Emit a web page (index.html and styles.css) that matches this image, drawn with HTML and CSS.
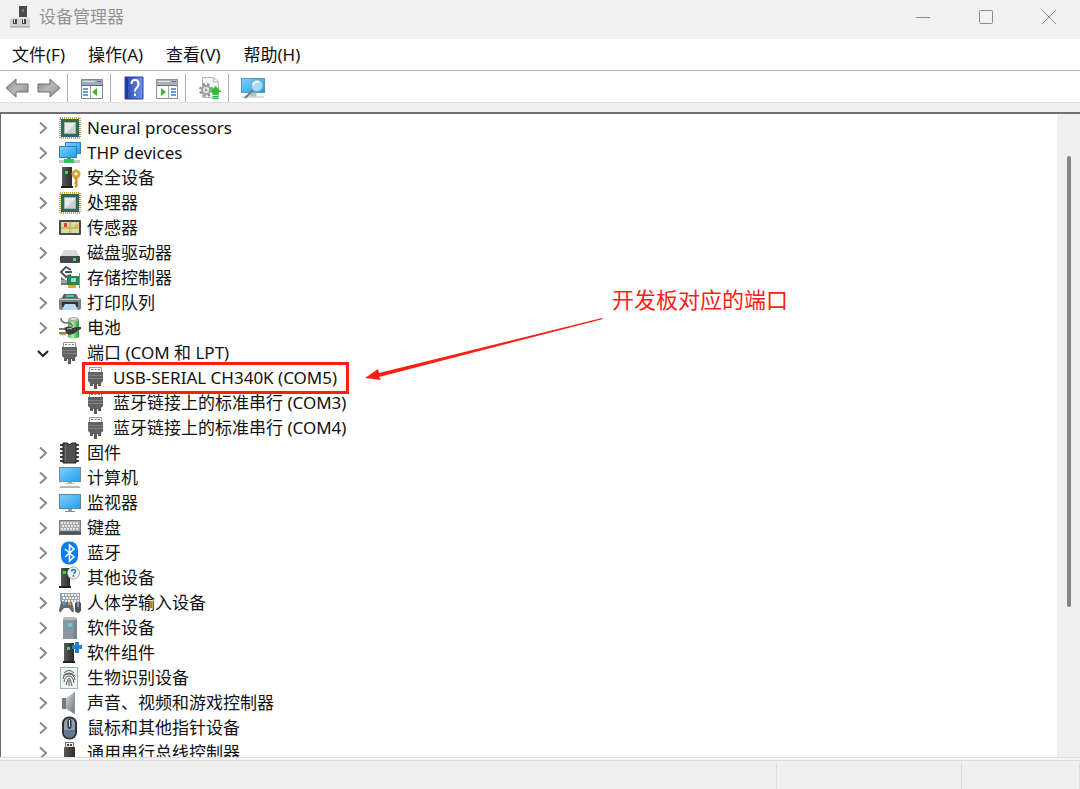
FILE: index.html
```html
<!DOCTYPE html>
<html lang="zh-CN">
<head>
    <meta charset="UTF-8">
    <meta name="viewport" content="width=device-width, initial-scale=1.0">
    <title>设备管理器</title>
    <link rel="stylesheet" href="styles.css">
</head>
<body>
    <svg class="sprite" aria-hidden="true">
        <defs>
            <linearGradient id="blue" x1="0" y1="0" x2="1" y2="1">
                <stop offset="0" stop-color="#7fd0fb"/>
                <stop offset="1" stop-color="#1f9df0"/>
            </linearGradient>
            <linearGradient id="steel" x1="0" y1="0" x2="1" y2="1">
                <stop offset="0" stop-color="#d5d8da"/>
                <stop offset="1" stop-color="#6b737a"/>
            </linearGradient>
            <linearGradient id="dark" x1="0" y1="0" x2="1" y2="0">
                <stop offset="0" stop-color="#5a5a5a"/>
                <stop offset="1" stop-color="#2b2b2b"/>
            </linearGradient>
            <linearGradient id="arrow" x1="0" y1="0" x2="1" y2="1">
                <stop offset="0" stop-color="#8a8a8a"/>
                <stop offset="0.5" stop-color="#b8b8b8"/>
                <stop offset="1" stop-color="#858585"/>
            </linearGradient>
            <linearGradient id="book" x1="0" y1="0" x2="1" y2="0">
                <stop offset="0" stop-color="#2746b0"/>
                <stop offset="1" stop-color="#6f92ea"/>
            </linearGradient>
            <linearGradient id="green" x1="0" y1="0" x2="1" y2="0">
                <stop offset="0" stop-color="#2fb53a"/>
                <stop offset="0.4" stop-color="#b4f2a8"/>
                <stop offset="1" stop-color="#1e9a2c"/>
            </linearGradient>

            <symbol id="chevron" viewBox="0 0 18 18">
                <path d="M6 3.5l6 5.5-6 5.5" fill="none" stroke="#8a8a8a" stroke-width="2"/>
            </symbol>
            <symbol id="chevron-open" viewBox="0 0 18 18">
                <path d="M4 7l5 5 5-5" fill="none" stroke="#262626" stroke-width="2.2"/>
            </symbol>

            <symbol id="chip" viewBox="0 0 24 24">
                <rect x="2" y="2" width="20" height="20" fill="none" stroke="#c9a04a" stroke-width="2" stroke-dasharray="1 1"/>
                <rect x="3" y="3" width="18" height="18" fill="#2e6b50"/>
                <rect x="6.5" y="6.5" width="11" height="11" fill="#e9ebea" stroke="#a3b8ad"/>
                <path d="M17 8v9H8z" fill="#cdd1cf"/>
            </symbol>
            <symbol id="network" viewBox="0 0 24 24">
                <rect x="7.5" y="1.500" width="15" height="11" fill="url(#blue)" stroke="#2f7fb8"/>
                <rect x="1.5" y="5.5" width="17" height="11" fill="url(#blue)" stroke="#2f7fb8"/>
                <rect x="9" y="17" width="4" height="2" fill="#2fb353"/>
                <rect x="1" y="19" width="21" height="3" fill="#c3c7c9"/>
                <rect x="6" y="18" width="10" height="4" fill="#35c25c"/>
            </symbol>
            <symbol id="security" viewBox="0 0 24 24">
                <rect x="4" y="1" width="10" height="20" fill="url(#dark)"/>
                <rect x="3" y="20" width="12" height="2" fill="#222"/>
                <rect x="7" y="5" width="3" height="3" fill="#35e04a"/>
                <circle cx="18" cy="8" r="3" fill="none" stroke="#d9a23a" stroke-width="3"/>
                <path d="M16.5 11h3v9l-1.500 2-1.500-2 1-1-1-2 1-2-1-2z" fill="#c98d24"/>
            </symbol>
            <symbol id="sensor" viewBox="0 0 24 24">
                <rect x="1" y="4" width="22" height="15" rx="1" fill="#4a4a4a"/>
                <rect x="3" y="6" width="18" height="11" fill="#cfe0a6"/>
                <path d="M3 12h18M12 6v11M16 12l5-4" stroke="#e0a94a" stroke-width="1.500" fill="none"/>
                <rect x="6" y="7" width="3" height="4" fill="#e23c3c"/>
            </symbol>
            <symbol id="disk" viewBox="0 0 24 24">
                <path d="M6 9h12l4 7H2z" fill="#d6d8d9"/>
                <rect x="2" y="15" width="20" height="7" rx="1" fill="#45494c"/>
                <rect x="15" y="17" width="3" height="3" fill="#3ee84f"/>
            </symbol>
            <symbol id="storage" viewBox="0 0 24 24">
                <path d="M13 4L8 1 3 6l5 5 5-2M7 6h7" fill="none" stroke="#555" stroke-width="2"/>
                <path d="M3 11l6 4 5-3v7H3z" fill="#777"/>
                <path d="M3 14h7v3H3z" fill="#a4a4a4"/>
                <rect x="9" y="10" width="12" height="9" fill="#26855c"/>
                <rect x="13" y="12" width="5" height="4" fill="#9fd6b8"/>
                <path d="M10 20.500h8" stroke="#e3ab22" stroke-width="3"/>
                <path d="M21.500 7v15" stroke="#8a8f92"/>
            </symbol>
            <symbol id="printer" viewBox="0 0 24 24">
                <path d="M6 3h12l3 5H3z" fill="#5d6366"/>
                <path d="M8 5h8" stroke="#3dd68c" stroke-width="2"/>
                <rect x="1" y="7" width="22" height="12" rx="2" fill="#7b8286"/>
                <path d="M2 8.500h20" stroke="#c5cacc"/>
                <rect x="4" y="11" width="16" height="5" fill="#2f3335"/>
                <path d="M7 13h10l3 6H4z" fill="#b7dcf2"/>
            </symbol>
            <symbol id="battery" viewBox="0 0 24 24">
                <path d="M10 4v17q5 3 11 0V4z" fill="url(#green)"/>
                <ellipse cx="15.5" cy="3.500" rx="5.500" ry="2.500" fill="#a8afa8"/>
                <ellipse cx="15.5" cy="3" rx="3" ry="1" fill="#dfe3df"/>
                <path d="M3 2q0 5 6 5t5 4" fill="none" stroke="#6b6b6b" stroke-width="1.500"/>
                <path d="M6 12q4-3 9 0l3-1h5v2l-4 2q-4 5-10 3z" fill="#3a3a3a"/>
                <path d="M9 13q3-1 5 0" fill="none" stroke="#c9c9c9"/>
                <path d="M1 13h7M1 17h8" stroke="#555" stroke-width="1.500"/>
                <path d="M2 18.500h6" stroke="#e0a82a" stroke-width="1.500"/>
            </symbol>
            <symbol id="port" viewBox="0 0 24 24">
                <path d="M5.5 8V1.500h12V8" fill="#fff" stroke="#9a9a9a"/>
                <path d="M7 3.500h2M10.500 3.500h2M14 3.500h2" stroke="#777"/>
                <path d="M4 6h15v9l-3 3H7l-3-3z" fill="#626262"/>
                <path d="M4 9.500h15M4 12.500h15" stroke="#808080"/>
                <path d="M7.500 17v3M11.500 17v6M15.500 17v3" stroke="#5a5a5a" stroke-width="3"/>
            </symbol>
            <symbol id="firmware" viewBox="0 0 24 24">
                <path d="M2 4h19M2 8h19M2 12h19M2 16h19M2 20h19" stroke="#444" stroke-width="2"/>
                <path d="M5 2h4q2.500 3 5 0h4v20H5z" fill="#505050" stroke="#222"/>
                <path d="M7.500 4v16" stroke="#707070"/>
            </symbol>
            <symbol id="computer" viewBox="0 0 24 24">
                <rect x="1.500" y="1.500" width="21" height="14" fill="url(#blue)" stroke="#74899a"/>
                <path d="M10 16h4v2h-4z" fill="#9db0bb"/>
                <path d="M7 17.500h10" stroke="#bac4ca"/>
                <path d="M3 20h18l2 2H1z" fill="#a8bac5"/>
            </symbol>
            <symbol id="monitor" viewBox="0 0 24 24">
                <rect x="1.500" y="3.500" width="21" height="14" fill="url(#blue)" stroke="#5c87a3"/>
                <path d="M10 18h4v2h-4z" fill="#8ca4b3"/>
                <path d="M7 20.500h10" stroke="#7d93a1"/>
            </symbol>
            <symbol id="keyboard" viewBox="0 0 24 24">
                <rect x="1" y="4" width="22" height="15" fill="#777f85"/>
                <rect x="2" y="5" width="20" height="10" fill="#a6abae"/>
                <path d="M3 7h18M4 10h17M3 13h18" stroke="#f6f6f6" stroke-width="1.600" stroke-dasharray="2 1"/>
                <path d="M1 17h22" stroke="#4d5459" stroke-width="3"/>
            </symbol>
            <symbol id="bluetooth" viewBox="0 0 24 24">
                <rect x="3" y="0.500" width="17" height="23" rx="8" fill="#0a7cf2"/>
                <path d="M7 8l9 8-4.500 4V4L16 8l-9 8" fill="none" stroke="#fff" stroke-width="1.600"/>
            </symbol>
            <symbol id="unknown" viewBox="0 0 24 24">
                <rect x="3" y="2" width="9" height="19" fill="url(#dark)"/>
                <rect x="1" y="20" width="12" height="2" fill="#222"/>
                <rect x="5" y="5" width="3" height="3" fill="#35e04a"/>
                <circle cx="15.500" cy="7" r="6" fill="#f4f8fb" stroke="#9aa6ae"/>
                <path d="M13.500 5.500q0-2 2-2t2 2q0 1-2 2.500M15.500 9v2" fill="none" stroke="#1d74c9" stroke-width="1.500"/>
            </symbol>
            <symbol id="hid" viewBox="0 0 24 24">
                <rect x="2" y="2" width="20" height="9" fill="#9da3a7"/>
                <path d="M4 4h17M5 7h16M4 10h17" stroke="#f3f3f3" stroke-width="2" stroke-dasharray="2 1"/>
                <path d="M3 11q1-1 3 0h5q2-1 3 0l2 8q0 3-2 2l-3-4H6l-3 4q-2 1-2-2z" fill="#656d73"/>
                <circle cx="6" cy="12" r="2" fill="#35a2e8"/>
                <path d="M10 11h3v3h-3z" fill="#e69330"/>
                <path d="M17 12q3-3 6 0v8q-3 4-6 0z" fill="#4a545c"/>
                <path d="M20 11v5" stroke="#ccc"/>
            </symbol>
            <symbol id="software" viewBox="0 0 24 24">
                <path d="M6 1h11l2 2v20H5V3z" fill="#8b979f"/>
                <path d="M6 1h11l2 3H5z" fill="#b4bdc2"/>
                <path d="M16 4h3v19h-4z" fill="#7a868e"/>
                <circle cx="12" cy="9" r="2" fill="#4be0f5"/>
            </symbol>
            <symbol id="component" viewBox="0 0 24 24">
                <rect x="6" y="2" width="10" height="19" fill="url(#dark)"/>
                <rect x="5" y="20" width="12" height="2" fill="#222"/>
                <rect x="9" y="6" width="3" height="3" fill="#35e04a"/>
                <path d="M14 4h3V1h4v3h3v4h-3v4h-4V8h-3z" fill="#2680c9"/>
            </symbol>
            <symbol id="finger" viewBox="0 0 24 24">
                <rect x="2.500" y="1.500" width="17" height="21" fill="#eef4f2" stroke="#9cb8b0"/>
                <path d="M6 7q5-5 10 0M5 10q6-6 12 0M5 13q1-5 6-5t6 6M6 16q1-6 5-6 4 0 5 7M8 19q2-7 3-7t3 8M11 14v6" fill="none" stroke="#555"/>
            </symbol>
            <symbol id="speaker" viewBox="0 0 24 24">
                <path d="M4 7h5v11H4z" fill="#747b80"/>
                <path d="M8 7l9-6v22l-9-5z" fill="url(#steel)"/>
                <path d="M16.500 1v22" stroke="#8a9196"/>
            </symbol>
            <symbol id="mouse" viewBox="0 0 24 24">
                <rect x="5" y="1.500" width="13" height="21" rx="6" fill="#8e9fb0" stroke="#2c3136" stroke-width="2"/>
                <path d="M6 14h11q0 8-5.500 8T6 14z" fill="#60788f"/>
                <rect x="9.500" y="3" width="4" height="10" rx="2" fill="#30363b"/>
                <path d="M11.500 4v7" stroke="#dde3e8"/>
            </symbol>
            <symbol id="usb" viewBox="0 0 24 24">
                <path d="M7.500 7V1.500h8V7" fill="#eee" stroke="#777"/>
                <path d="M9 4h2M12 4h2" stroke="#444" stroke-width="2"/>
                <rect x="6" y="6" width="11" height="16" rx="1" fill="url(#dark)"/>
            </symbol>

            <symbol id="devmgr" viewBox="0 0 24 24">
                <rect x="11" y="1" width="8" height="13" fill="#484c4c"/>
                <rect x="14" y="4" width="2" height="3" fill="#2f9e4c"/>
                <path d="M4 12h16l2 3H2z" fill="#e2e3e4"/>
                <rect x="2" y="14" width="20" height="8" fill="#cfd0d4"/>
                <path d="M5 14h4v5H5zM14 14h4v5h-4z" fill="#45484c"/>
                <path d="M6 14h1v4H6zM15 14h1v4h-1z" fill="#f5f5f5"/>
                <path d="M2 22h20" stroke="#999"/>
            </symbol>
            <symbol id="back" viewBox="0 0 24 24">
                <path d="M1 12l10-9v5h12v8H11v5z" fill="url(#arrow)" stroke="#6e6e6e"/>
            </symbol>
            <symbol id="forward" viewBox="0 0 24 24">
                <path d="M23 12L13 3v5H1v8h12v5z" fill="url(#arrow)" stroke="#6e6e6e"/>
            </symbol>
            <symbol id="tree-pane" viewBox="0 0 24 24">
                <rect x="1.500" y="3.500" width="21" height="19" fill="#fff" stroke="#7d8b98"/>
                <path d="M2 4h20v5H2z" fill="#9eacb9"/>
                <path d="M3 5.500h12" stroke="#dde6ee"/>
                <path d="M17 5.500h4M2 9.500h20" stroke="#596b7a"/>
                <path d="M3 13h5M3 16h5M3 19h5" stroke="#3b7cba" stroke-width="1.500"/>
                <path d="M10.500 10v12" stroke="#9aa6b0"/>
                <path d="M17 12v8l-5-4z" fill="#3fb52c"/>
            </symbol>
            <symbol id="action-pane" viewBox="0 0 24 24">
                <rect x="1.500" y="3.500" width="21" height="19" fill="#fff" stroke="#8b949c"/>
                <path d="M2 4h20v5H2z" fill="#abb1b6"/>
                <path d="M3 5.500h12" stroke="#e3e7eb"/>
                <path d="M17 5.500h4M2 9.500h20" stroke="#6a737b"/>
                <path d="M16 13h5M16 16h5M16 19h5" stroke="#3b7cba" stroke-width="1.500"/>
                <path d="M13.500 10v12" stroke="#9aa6b0"/>
                <path d="M6 12v8l5-4z" fill="#3fb52c"/>
            </symbol>
            <symbol id="help" viewBox="0 0 24 24">
                <path d="M2 1h18v22H2z" fill="url(#book)" stroke="#2442a0"/>
                <path d="M4 1v22" stroke="#152d80"/>
                <path d="M8.500 8q0-4 3.500-4t3.500 4q0 2-1.500 3.500-2 1.500-2 4M12 17.500v2.500" fill="none" stroke="#fff" stroke-width="2"/>
            </symbol>
            <symbol id="update" viewBox="0 0 24 24">
                <path d="M4.500 1.500h11l5 4v16h-16z" fill="#f4f4f4" stroke="#b9b9b9"/>
                <path d="M15.500 1v5h5" fill="none" stroke="#b9b9b9"/>
                <circle cx="8" cy="14" r="5" fill="none" stroke="#8e8e8e" stroke-width="4" stroke-dasharray="2 2"/>
                <circle cx="8" cy="14" r="4" fill="#eee" stroke="#a0a0a0" stroke-width="2"/>
                <circle cx="8" cy="14" r="1.500" fill="#999"/>
                <path d="M17.500 10l6 6h-3v3h-6v-3h-3z" fill="#27c22d"/>
                <path d="M14.500 20.500h6M14.500 22.500h6" stroke="#27c22d"/>
            </symbol>
            <symbol id="scan" viewBox="0 0 24 24">
                <rect x="0.500" y="2.500" width="23" height="14" fill="url(#blue)" stroke="#4b9bcb"/>
                <path d="M9 17h6v3H9zM1 21h22" fill="#b1bfc8" stroke="#b1bfc8"/>
                <path d="M12 14l-8 8" stroke="#6d7c86" stroke-width="2"/>
                <circle cx="16" cy="9.500" r="6" fill="#a5dcf7" stroke="#7c9db0"/>
                <path d="M12 9q2-4 6-3" fill="none" stroke="#e6f7ff" stroke-width="2"/>
            </symbol>
        </defs>
    </svg>

    <div class="window">
        <header class="titlebar">
            <svg class="icon"><use href="#devmgr"/></svg>
            <h1>设备管理器</h1>
            <div class="controls">
                <button type="button" aria-label="最小化"><svg viewBox="0 0 16 16"><path d="M1 8.500h14"/></svg></button>
                <button type="button" aria-label="最大化"><svg viewBox="0 0 16 16"><rect x="1.500" y="1.500" width="13" height="13" rx="1"/></svg></button>
                <button type="button" aria-label="关闭"><svg viewBox="0 0 16 16"><path d="M1 1l14 14M15 1L1 15"/></svg></button>
            </div>
        </header>

        <nav class="menubar">
            <button type="button">文件(F)</button>
            <button type="button">操作(A)</button>
            <button type="button">查看(V)</button>
            <button type="button">帮助(H)</button>
        </nav>

        <div class="toolbar">
            <button type="button" aria-label="后退"><svg class="icon"><use href="#back"/></svg></button>
            <button type="button" aria-label="前进"><svg class="icon"><use href="#forward"/></svg></button>
            <span class="separator"></span>
            <button type="button" aria-label="显示/隐藏控制台树"><svg class="icon"><use href="#tree-pane"/></svg></button>
            <span class="separator"></span>
            <button type="button" aria-label="帮助"><svg class="icon"><use href="#help"/></svg></button>
            <button type="button" aria-label="显示/隐藏操作窗格"><svg class="icon"><use href="#action-pane"/></svg></button>
            <span class="separator"></span>
            <button type="button" aria-label="更新驱动程序"><svg class="icon"><use href="#update"/></svg></button>
            <span class="separator"></span>
            <button type="button" aria-label="扫描检测硬件改动"><svg class="icon"><use href="#scan"/></svg></button>
        </div>

        <main class="content">
            <ul class="tree">
                <li><div class="row"><button type="button" aria-label="展开"><svg><use href="#chevron"/></svg></button><span class="node"><svg class="icon"><use href="#chip"/></svg>Neural processors</span></div></li>
                <li><div class="row"><button type="button" aria-label="展开"><svg><use href="#chevron"/></svg></button><span class="node"><svg class="icon"><use href="#network"/></svg>THP devices</span></div></li>
                <li><div class="row"><button type="button" aria-label="展开"><svg><use href="#chevron"/></svg></button><span class="node"><svg class="icon"><use href="#security"/></svg>安全设备</span></div></li>
                <li><div class="row"><button type="button" aria-label="展开"><svg><use href="#chevron"/></svg></button><span class="node"><svg class="icon"><use href="#chip"/></svg>处理器</span></div></li>
                <li><div class="row"><button type="button" aria-label="展开"><svg><use href="#chevron"/></svg></button><span class="node"><svg class="icon"><use href="#sensor"/></svg>传感器</span></div></li>
                <li><div class="row"><button type="button" aria-label="展开"><svg><use href="#chevron"/></svg></button><span class="node"><svg class="icon"><use href="#disk"/></svg>磁盘驱动器</span></div></li>
                <li><div class="row"><button type="button" aria-label="展开"><svg><use href="#chevron"/></svg></button><span class="node"><svg class="icon"><use href="#storage"/></svg>存储控制器</span></div></li>
                <li><div class="row"><button type="button" aria-label="展开"><svg><use href="#chevron"/></svg></button><span class="node"><svg class="icon"><use href="#printer"/></svg>打印队列</span></div></li>
                <li><div class="row"><button type="button" aria-label="展开"><svg><use href="#chevron"/></svg></button><span class="node"><svg class="icon"><use href="#battery"/></svg>电池</span></div></li>
                <li>
                    <div class="row"><button type="button" aria-label="折叠"><svg><use href="#chevron-open"/></svg></button><span class="node"><svg class="icon"><use href="#port"/></svg>端口 (COM 和 LPT)</span></div>
                    <ul class="children">
                        <li class="row"><span class="node marked"><svg class="icon"><use href="#port"/></svg>USB-SERIAL CH340K (COM5)</span></li>
                        <li class="row"><span class="node"><svg class="icon"><use href="#port"/></svg>蓝牙链接上的标准串行 (COM3)</span></li>
                        <li class="row"><span class="node"><svg class="icon"><use href="#port"/></svg>蓝牙链接上的标准串行 (COM4)</span></li>
                    </ul>
                </li>
                <li><div class="row"><button type="button" aria-label="展开"><svg><use href="#chevron"/></svg></button><span class="node"><svg class="icon"><use href="#firmware"/></svg>固件</span></div></li>
                <li><div class="row"><button type="button" aria-label="展开"><svg><use href="#chevron"/></svg></button><span class="node"><svg class="icon"><use href="#computer"/></svg>计算机</span></div></li>
                <li><div class="row"><button type="button" aria-label="展开"><svg><use href="#chevron"/></svg></button><span class="node"><svg class="icon"><use href="#monitor"/></svg>监视器</span></div></li>
                <li><div class="row"><button type="button" aria-label="展开"><svg><use href="#chevron"/></svg></button><span class="node"><svg class="icon"><use href="#keyboard"/></svg>键盘</span></div></li>
                <li><div class="row"><button type="button" aria-label="展开"><svg><use href="#chevron"/></svg></button><span class="node"><svg class="icon"><use href="#bluetooth"/></svg>蓝牙</span></div></li>
                <li><div class="row"><button type="button" aria-label="展开"><svg><use href="#chevron"/></svg></button><span class="node"><svg class="icon"><use href="#unknown"/></svg>其他设备</span></div></li>
                <li><div class="row"><button type="button" aria-label="展开"><svg><use href="#chevron"/></svg></button><span class="node"><svg class="icon"><use href="#hid"/></svg>人体学输入设备</span></div></li>
                <li><div class="row"><button type="button" aria-label="展开"><svg><use href="#chevron"/></svg></button><span class="node"><svg class="icon"><use href="#software"/></svg>软件设备</span></div></li>
                <li><div class="row"><button type="button" aria-label="展开"><svg><use href="#chevron"/></svg></button><span class="node"><svg class="icon"><use href="#component"/></svg>软件组件</span></div></li>
                <li><div class="row"><button type="button" aria-label="展开"><svg><use href="#chevron"/></svg></button><span class="node"><svg class="icon"><use href="#finger"/></svg>生物识别设备</span></div></li>
                <li><div class="row"><button type="button" aria-label="展开"><svg><use href="#chevron"/></svg></button><span class="node"><svg class="icon"><use href="#speaker"/></svg>声音、视频和游戏控制器</span></div></li>
                <li><div class="row"><button type="button" aria-label="展开"><svg><use href="#chevron"/></svg></button><span class="node"><svg class="icon"><use href="#mouse"/></svg>鼠标和其他指针设备</span></div></li>
                <li><div class="row"><button type="button" aria-label="展开"><svg><use href="#chevron"/></svg></button><span class="node"><svg class="icon"><use href="#usb"/></svg>通用串行总线控制器</span></div></li>
            </ul>

            <!-- note pointing at the board's port -->
            <div class="callout">
                <svg viewBox="0 0 240 64"><path d="M238 1L15 56l-1-4L1 61l16 2-2-3L239 2z"/></svg>
                <p>开发板对应的端口</p>
            </div>

            <div class="scrollbar"><div class="thumb"></div></div>
        </main>

        <footer class="statusbar">
            <div></div>
            <div></div>
            <div></div>
        </footer>
    </div>
</body>
</html>
```

FILE: styles.css
```css
* {
    box-sizing: border-box;
}

body {
    margin: 0;
    font-family: "Noto Sans", "Noto Sans CJK SC", sans-serif;
    font-size: 17px;
    color: #111;
}

button {
    font: inherit;
    color: inherit;
    background: none;
    border: 0;
    padding: 0;
}

ul {
    list-style: none;
    margin: 0;
    padding: 0;
}

.sprite {
    position: absolute;
    width: 0;
    height: 0;
}

.icon {
    display: block;
    flex: none;
    width: 24px;
    height: 24px;
}

.window {
    display: flex;
    flex-direction: column;
    height: 100vh;
    background: #fff;
}

/* title bar */
.titlebar {
    display: flex;
    align-items: center;
    flex: none;
    height: 39px;
    padding: 0 0 5px 8px;
    background: #f2f2f2;
}

    .titlebar h1 {
        margin: 0 0 0 7px;
        font-size: 17px;
        font-weight: normal;
        line-height: 24px;
        color: #939393;
    }

.controls {
    display: flex;
    margin-left: auto;
}

    .controls button {
        display: flex;
        align-items: center;
        justify-content: center;
        width: 63px;
        height: 32px;
    }

    .controls svg {
        width: 16px;
        height: 16px;
        fill: none;
        stroke: #8c8c8c;
    }

/* menu and toolbar */
.menubar {
    display: flex;
    flex: none;
    gap: 23px;
    height: 32px;
    padding: 0 12px 2px;
    border-bottom: 1px solid #b5b5b5;
}

.toolbar {
    display: flex;
    align-items: center;
    flex: none;
    height: 32px;
    padding: 2px 0 0 1px;
    border-bottom: 1px solid #dfdfdf;
}

    .toolbar button {
        display: flex;
        justify-content: center;
        width: 32px;
    }

.separator {
    width: 1px;
    height: 28px;
    margin: 0 8px 0 2px;
    background: #adadad;
}

/* device tree */
.content {
    display: flex;
    position: relative;
    flex: 1;
    min-height: 0;
    margin-top: 9px;
    border-top: 2px solid #6f6f6f;
    border-left: 1px solid #6f6f6f;
    overflow: hidden;
    box-shadow: 0 -9px 0 #efefef;
}

.tree {
    flex: 1;
    padding: 1px 0 0 33px;
}

.row {
    display: flex;
    align-items: center;
    height: 25px;
}

    .row button,
    .row button svg {
        display: block;
        width: 18px;
        height: 18px;
    }

.node {
    display: flex;
    align-items: center;
    gap: 5px;
    margin-left: 6px;
    line-height: 24px;
    white-space: nowrap;
}

.children {
    padding-left: 44px;
}

.marked {
    position: relative;
}

    .marked::after {
        content: "";
        position: absolute;
        inset: -4px -12px -4px -2px;
        border: 3px solid #fb1e14;
    }

.callout {
    position: absolute;
    top: 171px;
    left: 363px;
    color: #fb1e14;
}

    .callout svg {
        display: block;
        width: 240px;
        height: 64px;
        margin-top: 32px;
        fill: #fb1e14;
    }

    .callout p {
        position: absolute;
        top: 0;
        left: 248px;
        margin: 0;
        font-size: 22px;
        line-height: 28px;
        white-space: nowrap;
    }

.scrollbar {
    flex: none;
    width: 23px;
    padding-top: 42px;
    background: #efefef;
}

.thumb {
    width: 4px;
    height: 75%;
    margin-left: 10px;
    border-radius: 2px;
    background: #868686;
}

/* status bar */
.statusbar {
    display: flex;
    flex: none;
    height: 32px;
    border-top: 1px solid #dedede;
    background: #efefef;
    box-shadow: inset 0 2px 0 #f6f6f6, inset 0 3px 0 #e0e0e0;
}

    .statusbar div {
        width: 185px;
        margin-top: 5px;
        border-right: 1px solid #dcdcdc;
    }

    .statusbar div:first-child {
        flex: 1;
    }

    .statusbar div:last-child {
        width: 118px;
    }
```
